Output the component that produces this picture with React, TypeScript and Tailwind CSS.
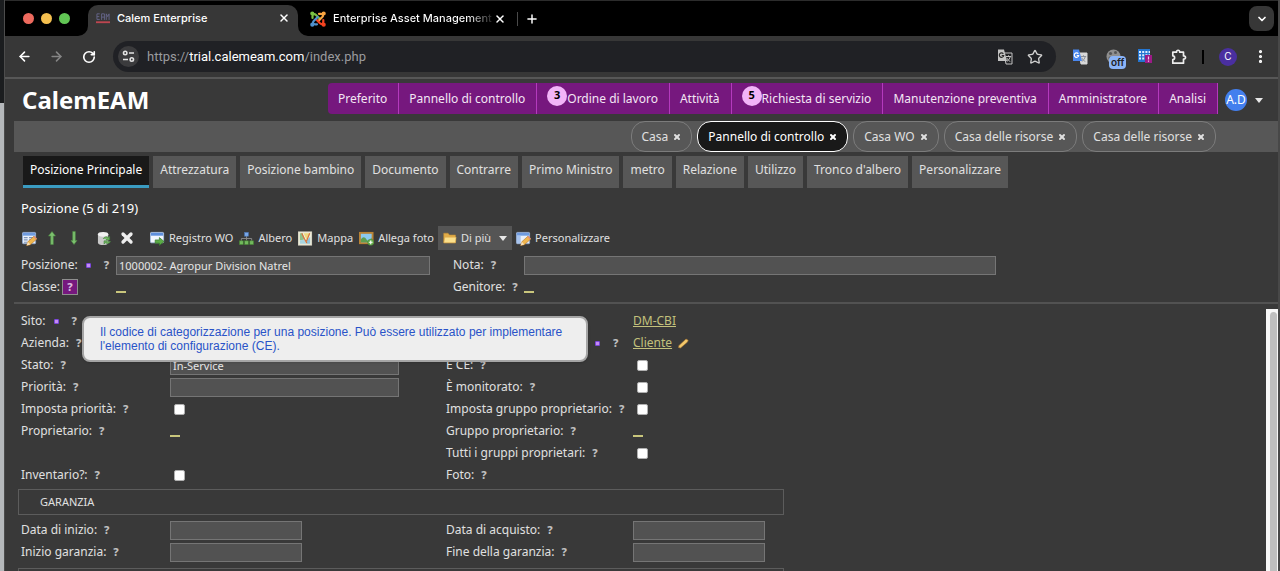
import React from 'react';
import { ArrowLeft, ArrowRight, ChevronDown, MoreVertical, Plus, RotateCw, Star, X } from 'lucide-react';

const menuItems = [
    { label: 'Preferito' },
    { label: 'Pannello di controllo' },
    { label: 'Ordine di lavoro', badge: 3 },
    { label: 'Attività' },
    { label: 'Richiesta di servizio', badge: 5 },
    { label: 'Manutenzione preventiva' },
    { label: 'Amministratore' },
    { label: 'Analisi' },
];

const openScreens = [
    { label: 'Casa' },
    { label: 'Pannello di controllo', active: true },
    { label: 'Casa WO' },
    { label: 'Casa delle risorse' },
    { label: 'Casa delle risorse' },
];

const sections = [
    'Posizione Principale',
    'Attrezzatura',
    'Posizione bambino',
    'Documento',
    'Contrarre',
    'Primo Ministro',
    'metro',
    'Relazione',
    'Utilizzo',
    "Tronco d'albero",
    'Personalizzare',
];

const inputClass = 'h-[19px] border border-[#757575] bg-[#525252] px-[2px] text-[11px] text-[#e6e6e6] outline-none';

function EditIcon({ form = true }: { form?: boolean }) {
    return (
        <svg width="15" height="15" viewBox="0 0 16 16">
            <rect x="0.5" y="1.5" width="14" height="12" rx="1" fill="#e9f0fb" stroke="#8fa9cf" />
            <rect x="1" y="2" width="13" height="3" fill="#6f9be0" />
            {form ? (
                <path d="M2 7h4M2 9.500h4M2 12h4M7.500 7h5M7.500 9.500h3" stroke="#7f94b8" strokeWidth="1.200" />
            ) : (
                <path d="M1 5h4v8H1z" fill="#a8c4ee" />
            )}
            <path d="M5 15.500l1.200-4 6.600-6 3 3-7 6.200z" fill="#f0b64f" stroke="#b77a2c" strokeWidth="0.700" />
            <path d="M5 15.500l1.200-4 2.700 3z" fill="#f7e0bb" />
            <path d="M12.800 5.800l2.600 2.700" stroke="#e08b7a" strokeWidth="1.500" />
        </svg>
    );
}

function UpIcon() {
    return (
        <svg width="8" height="14" viewBox="0 0 8 14">
            <path d="M4 0.500l3.500 4.500H5.300v8.500H2.700V5H0.500z" fill="#7cc06e" stroke="#4d8b43" strokeWidth="0.600" />
        </svg>
    );
}

function DownIcon() {
    return (
        <svg width="8" height="14" viewBox="0 0 8 14">
            <path d="M2.700 0.500h2.600v9h1.700L4 13.500 1 9.500h1.700z" fill="#7cc06e" stroke="#4d8b43" strokeWidth="0.600" />
        </svg>
    );
}

function RefreshIcon() {
    return (
        <svg width="15" height="15" viewBox="0 0 16 16">
            <path d="M1 3.500v9c0 1.500 2.500 2.500 5.500 2.500s5.500-1 5.500-2.500v-9z" fill="#c9c9c9" />
            <ellipse cx="6.500" cy="3.500" rx="5.500" ry="2.500" fill="#f1f1f1" />
            <path d="M6.500 8.500c1-2.500 4-3 5.500-1.500l1.500-1.500v4H9.500l1.200-1.200M14.500 11c-1 2.500-4 3-5.500 1.500L7.500 14v-3.500h4l-1.200 1" fill="#6db35f" stroke="#3f7f38" strokeWidth="0.600" />
        </svg>
    );
}

function WorkOrderIcon() {
    return (
        <svg width="15" height="15" viewBox="0 0 16 16">
            <rect x="0.500" y="1.500" width="14" height="11" rx="1" fill="#f2f6fd" stroke="#a9bfdf" />
            <rect x="1" y="2" width="13" height="3" fill="#5e8fdc" />
            <path d="M5.500 9.500h4.500V7l5 4.200-5 4.200V13H5.500z" fill="#5bab47" stroke="#35742a" strokeWidth="0.700" />
        </svg>
    );
}

function TreeIcon() {
    return (
        <svg width="15" height="15" viewBox="0 0 16 16">
            <path d="M8 5v5M2.500 10.500V8h11v2.500" fill="none" stroke="#8a8a8a" />
            <rect x="6" y="1.500" width="4" height="4" fill="#77a7e8" stroke="#4c78b8" strokeWidth="0.600" />
            <rect x="0.500" y="10.500" width="4" height="4" fill="#72b95d" stroke="#42832f" strokeWidth="0.600" />
            <rect x="6" y="10.500" width="4" height="4" fill="#72b95d" stroke="#42832f" strokeWidth="0.600" />
            <rect x="11.500" y="10.500" width="4" height="4" fill="#72b95d" stroke="#42832f" strokeWidth="0.600" />
        </svg>
    );
}

function MapIcon() {
    return (
        <svg width="15" height="15" viewBox="0 0 16 16">
            <rect x="0.500" y="1" width="14" height="14" fill="#f1eedb" stroke="#dcdac8" />
            <path d="M2 2.500h3L7 9l-5 1z" fill="#8fc08a" />
            <path d="M13 6v7.500H9.500L9 10z" fill="#8fc4dd" />
            <path d="M2 10l5-1 2 4.500H2z" fill="#a8d5e0" />
            <path d="M6 2.500h6.500L9 9z" fill="#edd87d" />
            <path d="M4 2.500l3 6 2.500 4.500M12.500 2.500L9 11" fill="none" stroke="#d9743c" strokeWidth="1.300" />
        </svg>
    );
}

function PhotoIcon() {
    return (
        <svg width="15" height="15" viewBox="0 0 16 16">
            <rect x="1" y="2" width="13.500" height="11" fill="#8cc9ee" stroke="#b98335" strokeWidth="2" />
            <path d="M2 9c2-3 4-3 6 0s4 1 5.500-2v5H2z" fill="#5e9e50" />
            <circle cx="12.500" cy="12" r="3.300" fill="#66b04e" stroke="#3e7c2d" strokeWidth="0.500" />
            <path d="M12.500 10v4M10.500 12h4" stroke="#fff" strokeWidth="1.200" />
        </svg>
    );
}

function FolderIcon() {
    return (
        <svg width="14" height="14" viewBox="0 0 16 16">
            <path d="M0.800 13.500v-11h5l1.500 2h7v9z" fill="#e2ac48" stroke="#bd8a30" strokeWidth="0.600" />
            <path d="M1 13.500L2 7h13l-0.800 6.500z" fill="#fbe08c" stroke="#d9a648" strokeWidth="0.600" />
        </svg>
    );
}

function JoomlaIcon() {
    return (
        <svg width="16" height="16" viewBox="0 0 16 16" fill="none" strokeWidth="2.200" strokeLinecap="round" strokeLinejoin="round">
            <path d="M2.500 7V5c0-2 2-2.500 3.500-1l4 4" stroke="#7ac143" />
            <path d="M9 2.800h2c2 0 2.700 1.700 1.300 3.200l-4 4" stroke="#f9a541" />
            <path d="M13.300 9v2c0 2-1.800 2.700-3.300 1.300l-4-4" stroke="#f44321" />
            <path d="M7 13.300H5c-2 0-2.700-1.800-1.300-3.300l4-4" stroke="#5091cd" />
            <circle cx="2.300" cy="2.500" r="1" fill="#7ac143" stroke="#7ac143" />
            <circle cx="13.700" cy="2.500" r="1" fill="#f9a541" stroke="#f9a541" />
            <circle cx="13.700" cy="13.700" r="1" fill="#f44321" stroke="#f44321" />
            <circle cx="2.300" cy="13.700" r="1" fill="#5091cd" stroke="#5091cd" />
        </svg>
    );
}

function TranslateIcon({ color = false }: { color?: boolean }) {
    return (
        <svg width="16" height="16" viewBox="0 0 16 16">
            <path d="M7 4h8v11H9z" fill={color ? '#d8d8d8' : '#202124'} stroke={color ? '#d8d8d8' : '#c4c4c4'} />
            <path d="M8.800 7.500h5.400M11.500 6.300v1.200M13.300 7.500c-0.500 2-2 4-3.500 5M9.800 8.800c0.500 1.500 2 3 3.500 3.700" fill="none" stroke={color ? '#8c9199' : '#c4c4c4'} />
            <path d="M1 0.500h6l3 11.500H1z" fill={color ? '#4a87ee' : '#c4c4c4'} />
            <path d="M6.300 4.800A2.200 2.200 0 1 0 6.700 6.500H4.700" fill="none" stroke={color ? '#fff' : '#2b2b2b'} strokeWidth="1.200" />
        </svg>
    );
}

function SiteInfoIcon() {
    return (
        <svg width="13" height="13" viewBox="0 0 13 13" fill="none" stroke="#e3e3e3" strokeWidth="1.600">
            <circle cx="3.200" cy="3" r="1.700" />
            <path d="M7 3h5M1 9.500h5" />
            <circle cx="9.800" cy="9.500" r="1.700" />
        </svg>
    );
}

function ExtensionIcon() {
    return (
        <svg width="16" height="16" viewBox="0 0 16 16" fill="none" stroke="#ededed" strokeWidth="1.700" strokeLinejoin="round">
            <path d="M1.800 3.200h3.700c-0.300-2.600 3.500-2.600 3.200 0h3.800v3.700c2.700-0.300 2.700 3.500 0 3.200v4.100H1.800v-3.500c2.400 0 2.400-3.900 0-3.900z" />
        </svg>
    );
}

function Mark({ required }: { required?: boolean }) {
    return (
        <>
            {required && <span className="ml-2 mr-[6px] h-[5px] w-[5px] rounded-[1px] border border-[#7a45dc] bg-[#c58cf2]" />}
            <button type="button" className="ml-[7px] text-[11px] font-extrabold text-[#c0c0c0]">?</button>
        </>
    );
}

type FieldProps = {
    id: string;
    label: string;
    required?: boolean;
    children?: React.ReactNode;
};

function Field({ id, label, required, children }: FieldProps) {
    return (
        <>
            <div className="flex items-center whitespace-nowrap">
                <label htmlFor={id}>{label}:</label>
                <Mark required={required} />
            </div>
            <div className="flex items-center">{children}</div>
        </>
    );
}

function Check({ id }: { id: string }) {
    return <input id={id} type="checkbox" className="ml-1 h-[11px] w-[11px] appearance-none rounded-[2px] border border-[#b0b0b0] bg-white" />;
}

function EmptyLink({ id }: { id: string }) {
    return <a id={id} href="#" aria-label="Seleziona" className="block h-3 w-[10px] border-b-2 border-[#c9c67c]" />;
}

function BrowserChrome() {
    return (
        <header className="shrink-0 text-white" style={{ fontFamily: 'Inter, "Liberation Sans", sans-serif' }}>
            <div className="flex h-9 items-center border-t border-[#2c2c2c] bg-black pl-[18px] pr-1 text-[11px] font-medium">
                <div className="flex gap-[7px]">
                    <span className="h-[11px] w-[11px] rounded-full bg-[#ed6a5e]" />
                    <span className="h-[11px] w-[11px] rounded-full bg-[#f4bf4f]" />
                    <span className="h-[11px] w-[11px] rounded-full bg-[#61c554]" />
                </div>
                <svg width="10" height="10" viewBox="0 0 10 10" className="ml-2 self-end"><path d="M10 0v10H0A10 10 0 0 0 10 0z" fill="#373737" /></svg>
                <div className="flex w-[210px] items-center self-end rounded-t-[10px] bg-[#373737] px-2 pb-2 pt-[3px] leading-5">
                    <svg width="14" height="13" viewBox="0 0 15 13" fill="none">
                        <path d="M4 1.500H1v6h3M1 4.500h2.500M6 8V1.500h3V8M6 5h3M11 8V1.500l1.500 3 1.500-3V8" stroke="#65658a" />
                        <path d="M0 10.500h15" stroke="#bd4650" strokeWidth="2" />
                    </svg>
                    <span className="ml-[7px] flex-1">Calem Enterprise</span>
                    <button type="button" aria-label="Chiudi"><X size={12} strokeWidth={3} /></button>
                </div>
                <svg width="10" height="10" viewBox="0 0 10 10" className="self-end"><path d="M0 0v10h10A10 10 0 0 1 0 0z" fill="#373737" /></svg>
                <div className="flex items-center pl-[2px]">
                    <JoomlaIcon />
                    <span className="ml-[7px] whitespace-nowrap bg-gradient-to-r from-white from-85% to-[#222] bg-clip-text text-transparent">Enterprise Asset Management</span>
                    <button type="button" aria-label="Chiudi" className="ml-[2px]"><X size={12} strokeWidth={3} /></button>
                </div>
                <span className="ml-[11px] h-[14px] w-px bg-[#4a4a4a]" />
                <button type="button" aria-label="Nuova scheda" className="ml-[7px]"><Plus size={14} strokeWidth={2.500} /></button>
                <button type="button" aria-label="Cerca schede" className="ml-auto flex h-[25px] w-[25px] items-center justify-center rounded-lg bg-[#373737]"><ChevronDown size={12} strokeWidth={3.500} /></button>
            </div>
            <div className="flex h-[41px] items-center bg-[#373737] pr-[9px]">
                <button type="button" aria-label="Indietro" className="ml-3"><ArrowLeft size={15} strokeWidth={2.500} /></button>
                <button type="button" aria-label="Avanti" className="ml-[17px] text-[#858585]"><ArrowRight size={15} strokeWidth={2.500} /></button>
                <button type="button" aria-label="Ricarica" className="ml-[18px]"><RotateCw size={14} strokeWidth={2.800} /></button>
                <div className="ml-[17px] flex h-[31px] flex-1 items-center rounded-full bg-[#202125] pl-[5px] pr-[13px]">
                    <span className="flex h-[21px] w-[21px] items-center justify-center rounded-full bg-[#3b3b3d]"><SiteInfoIcon /></span>
                    <span className="ml-2 text-[13px] text-[#9a9b9e]" style={{ fontFamily: 'Roboto, sans-serif' }}>https://<span className="text-white">trial.calemeam.com</span>/index.php</span>
                    <span className="ml-auto"><TranslateIcon /></span>
                    <Star size={16} className="ml-[14px] text-[#d0d0d0]" strokeWidth={2} />
                </div>
                <div className="ml-4"><TranslateIcon color /></div>
                <div className="relative ml-[18px] h-[15px] w-[15px]">
                    <svg width="15" height="15" viewBox="0 0 15 15">
                        <circle cx="7.500" cy="7.500" r="7" fill="#8f8f8f" />
                        <circle cx="4.500" cy="4.500" r="1.600" fill="#565656" /><circle cx="9.500" cy="3.500" r="1.500" fill="#565656" /><circle cx="4" cy="9" r="1.500" fill="#565656" />
                    </svg>
                    <span className="absolute left-[3px] top-[7px] rounded bg-[#8ab4f8] px-[2px] text-[10px] font-semibold leading-[13px] text-[#202124]">off</span>
                </div>
                <svg width="15" height="15" viewBox="0 0 15 15" className="ml-[17px]">
                    <rect width="12" height="13" fill="#2476d2" />
                    <path d="M1 3h11M1 6.300h11M1 9.600h11" stroke="#dcecff" strokeWidth="2" strokeDasharray="2 1.200" />
                    <rect x="7" y="6" width="7" height="8" fill="#9c1a87" />
                    <path d="M10.500 7.500v3M10.500 11.500v1.200" stroke="#f6c8ee" strokeWidth="1.200" />
                </svg>
                <div className="ml-[18px]"><ExtensionIcon /></div>
                <span className="ml-[15px] h-[14px] w-[2px] bg-black" />
                <span className="ml-[15px] flex h-[18px] w-[18px] items-center justify-center rounded-full bg-[#4a2fa0] text-[10px]">C</span>
                <button type="button" aria-label="Menu" className="ml-[15px]"><MoreVertical size={17} strokeWidth={2.500} /></button>
            </div>
            <div className="h-[2px] bg-[#575757]" />
        </header>
    );
}

function AppHeader() {
    return (
        <div className="flex h-[42px] shrink-0 items-center pl-[17px] pr-[15px]">
            <h1 className="text-2xl font-bold leading-none text-white">CalemEAM</h1>
            <nav className="mb-[3px] ml-auto flex h-[31px] overflow-hidden rounded-l bg-[#76187e] text-xs text-[#f3e6f4]">
                {menuItems.map((item) => (
                    <a key={item.label} href="#" className="flex items-center whitespace-nowrap border-r border-[#b43abd] pl-[10px] pr-[11px]">
                        {item.badge && (
                            <span className="mb-[6px] flex h-5 w-5 items-center justify-center rounded-full bg-[#f2b4f8] text-[11px] font-bold text-black">{item.badge}</span>
                        )}
                        {item.label}
                    </a>
                ))}
            </nav>
            <button type="button" className="ml-[7px] flex items-center gap-2">
                <span className="flex h-[22px] w-[22px] items-center justify-center rounded-full bg-[#437fee] text-xs text-white">A.D</span>
                <svg width="8" height="5" viewBox="0 0 8 5"><path d="M0 0h8L4 5z" fill="#e8e8e8" /></svg>
            </button>
        </div>
    );
}

function OpenScreens() {
    return (
        <div className="ml-[9px] flex h-[31px] shrink-0 items-start justify-end gap-[5px] bg-[#575757] pr-[62px]">
            {openScreens.map((screen, index) => (
                <div
                    key={index}
                    className={
                        screen.active
                            ? 'flex h-[31px] items-center gap-[5px] rounded-[14px] border border-white bg-[#191919] px-[10px] text-white'
                            : 'flex h-[31px] items-center gap-[5px] rounded-[14px] border border-[#7c7c7c] px-[10px]'
                    }
                >
                    <a href="#">{screen.label}</a>
                    <button type="button" aria-label="Chiudi"><X size={8} strokeWidth={6} /></button>
                </div>
            ))}
        </div>
    );
}

function Toolbar() {
    return (
        <div className="flex h-6 shrink-0 items-center pl-[17px] text-[11px]">
            <button type="button" aria-label="Modifica"><EditIcon /></button>
            <button type="button" aria-label="Precedente" className="ml-[11px]"><UpIcon /></button>
            <button type="button" aria-label="Successivo" className="ml-[14px]"><DownIcon /></button>
            <button type="button" aria-label="Aggiorna" className="ml-[19px]"><RefreshIcon /></button>
            <button type="button" aria-label="Elimina" className="ml-[7px] text-[#eee]"><X size={16} strokeWidth={5} /></button>
            <button type="button" className="ml-[15px] flex items-center gap-1"><WorkOrderIcon />Registro WO</button>
            <button type="button" className="ml-[6px] flex items-center gap-1"><TreeIcon />Albero</button>
            <button type="button" className="ml-[6px] flex items-center gap-1"><MapIcon />Mappa</button>
            <button type="button" className="ml-[6px] flex items-center gap-1"><PhotoIcon />Allega foto</button>
            <button type="button" className="ml-1 flex h-6 items-center gap-1 bg-[#555] px-[5px]">
                <FolderIcon />Di più
                <svg width="8" height="5" viewBox="0 0 8 5" className="ml-1"><path d="M0 0h8L4 5z" fill="#e8e8e8" /></svg>
            </button>
            <button type="button" className="ml-1 flex items-center gap-1"><EditIcon form={false} />Personalizzare</button>
        </div>
    );
}

const gridClass = 'grid grid-cols-[149px_276px_187px_1fr] auto-rows-[22px] pl-4';

function App() {
    return (
        <div className="flex h-screen overflow-hidden bg-[#393939] text-xs text-[#e0e0e0]" style={{ fontFamily: '"Noto Sans", sans-serif' }}>
            <div className="flex w-[5px] shrink-0 flex-col border-r border-[#4c4c4c]">
                <div className="h-[103px] bg-[#1b1d1f]" />
                <div className="flex-1 bg-[#b5b8bb]" />
            </div>
            <div className="flex min-w-0 flex-1 flex-col border-r-2 border-[#484848]">
                <BrowserChrome />
                <AppHeader />
                <OpenScreens />
                <nav className="mt-1 flex shrink-0 gap-1 pl-[18px]">
                    {sections.map((section, index) => (
                        <a
                            key={section}
                            href="#"
                            className={
                                index === 0
                                    ? 'h-8 whitespace-nowrap border-b-[3px] border-[#3a9bc1] bg-[#191919] px-[7px] pt-[6px] leading-4 text-white'
                                    : 'h-8 whitespace-nowrap bg-[#575757] px-[7px] pt-[6px] leading-4'
                            }
                        >
                            {section}
                        </a>
                    ))}
                </nav>
                <h2 className="mb-2 mt-[10px] shrink-0 pl-4 text-[13px] leading-5 text-white">Posizione (5 di 219)</h2>
                <Toolbar />
                <div className="ml-4 mt-1 grid shrink-0 grid-cols-[95px_337px_71px_472px] auto-rows-[22px]">
                    <Field id="location" label="Posizione" required>
                        <input id="location" defaultValue="1000002- Agropur Division Natrel" className={`${inputClass} w-[314px]`} />
                    </Field>
                    <Field id="note" label="Nota">
                        <input id="note" className={`${inputClass} w-full`} />
                    </Field>
                    <div className="flex items-center">
                        <label htmlFor="class">Classe:</label>
                        <button type="button" className="ml-[2px] flex h-4 w-4 items-center justify-center border border-[#8f8f8f] bg-[#76187e] text-[11px] font-extrabold text-[#d9b8dc]">?</button>
                    </div>
                    <div className="flex items-center"><EmptyLink id="class" /></div>
                    <Field id="parent" label="Genitore"><EmptyLink id="parent" /></Field>
                </div>
                <div className="ml-[9px] mt-1 h-[2px] shrink-0 bg-[#525252]" />
                <div className="relative flex min-h-0 flex-1">
                    <main className="min-w-0 flex-1 overflow-hidden pt-[6px]">
                        <form className={gridClass}>
                            <Field id="site" label="Sito" required />
                            <div />
                            <div className="flex items-center"><a href="#" className="text-[#c3c17c] underline">DM-CBI</a></div>

                            <Field id="company" label="Azienda" />
                            <div className="flex items-center pl-[141px]"><Mark required /></div>
                            <div className="flex items-center gap-[6px]">
                                <a href="#" className="text-[#c3c17c] underline">Cliente</a>
                                <svg width="11" height="11" viewBox="0 0 11 11"><path d="M0.500 9.500L1 7.500 8 1l2.200 1.300L9.500 4 2.500 10z" fill="#f3c86b" stroke="#a87531" strokeWidth="0.600" /></svg>
                            </div>

                            <Field id="status" label="Stato"><input id="status" defaultValue="In-Service" className={`${inputClass} w-[229px]`} /></Field>
                            <Field id="ci" label="È CE"><Check id="ci" /></Field>

                            <Field id="priority" label="Priorità"><input id="priority" className={`${inputClass} w-[229px]`} /></Field>
                            <Field id="monitored" label="È monitorato"><Check id="monitored" /></Field>

                            <Field id="set-priority" label="Imposta priorità"><Check id="set-priority" /></Field>
                            <Field id="set-group" label="Imposta gruppo proprietario"><Check id="set-group" /></Field>

                            <Field id="owner" label="Proprietario"><EmptyLink id="owner" /></Field>
                            <Field id="group" label="Gruppo proprietario"><EmptyLink id="group" /></Field>

                            <div className="col-span-2" />
                            <Field id="all-groups" label="Tutti i gruppi proprietari"><Check id="all-groups" /></Field>

                            <Field id="inventory" label="Inventario?"><Check id="inventory" /></Field>
                            <Field id="photo" label="Foto" />
                        </form>
                        <h3 className="mb-1 ml-[13px] mt-[3px] h-[26px] w-[766px] border border-[#5c5c5c] pl-[21px] text-[11px] leading-6">GARANZIA</h3>
                        <form className={gridClass}>
                            <Field id="start-date" label="Data di inizio"><input id="start-date" className={`${inputClass} w-[132px]`} /></Field>
                            <Field id="buy-date" label="Data di acquisto"><input id="buy-date" className={`${inputClass} w-[132px]`} /></Field>
                            <Field id="warranty-start" label="Inizio garanzia"><input id="warranty-start" className={`${inputClass} w-[132px]`} /></Field>
                            <Field id="warranty-end" label="Fine della garanzia"><input id="warranty-end" className={`${inputClass} w-[132px]`} /></Field>
                        </form>
                        <div className="ml-[13px] mt-[5px] h-[26px] w-[766px] border border-[#5c5c5c]" />
                    </main>
                    <div className="mt-[5px] flex w-3 shrink-0 justify-end bg-[#f7f7f7] pr-px pt-[3px]">
                        <div className="w-[7px] rounded-t-full bg-[#bfbfbf]" />
                    </div>
                    <div
                        role="tooltip"
                        className="absolute left-[77px] top-3 w-[506px] rounded-lg border-2 border-[#a5a5a5] bg-[#eee] px-4 py-[7px] text-xs leading-[14px] text-[#2953c8] shadow"
                        style={{ fontFamily: '"Liberation Sans", Arial, sans-serif' }}
                    >
                        Il codice di categorizzazione per una posizione. Può essere utilizzato per implementare l'elemento di configurazione (CE).
                    </div>
                </div>
            </div>
        </div>
    );
}

export default App;
